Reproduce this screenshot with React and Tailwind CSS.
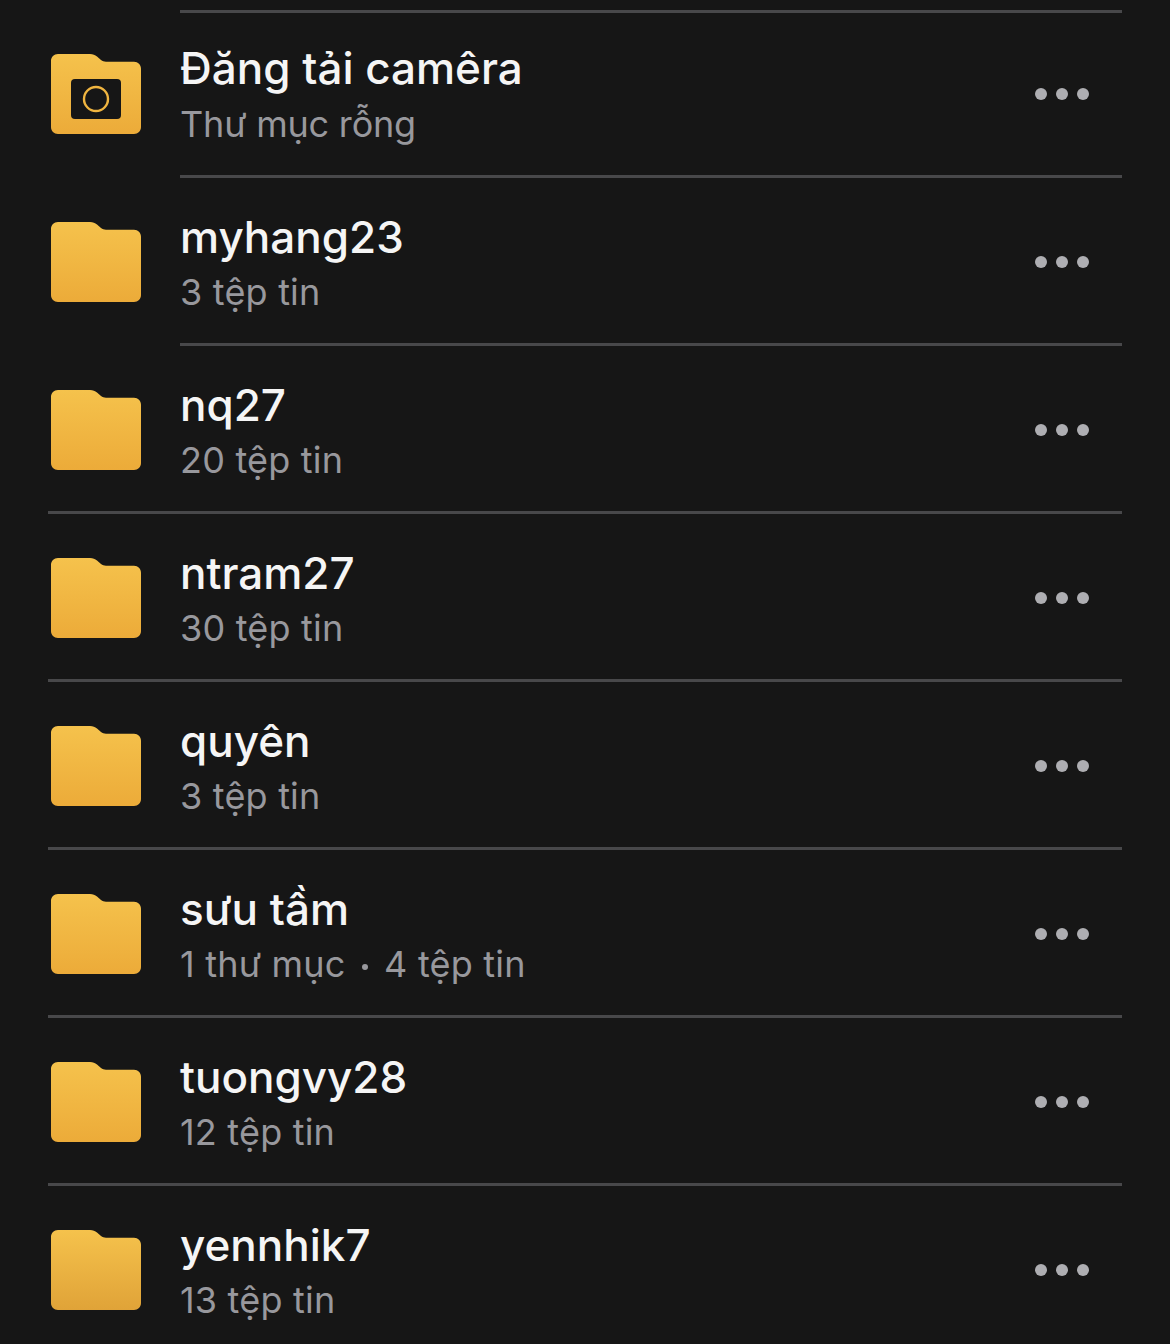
const folders = [
  { name: 'Đăng tải camêra', sub: 'Thư mục rỗng', camera: true, inset: true, first: true },
  { name: 'myhang23', sub: '3 tệp tin', inset: true },
  { name: 'nq27', sub: '20 tệp tin' },
  { name: 'ntram27', sub: '30 tệp tin' },
  { name: 'quyên', sub: '3 tệp tin' },
  { name: 'sưu tầm', sub: <>1 thư mục <span className="inline-block w-[6px] h-[6px] rounded-full bg-[#98989d] align-middle mx-[6px]" /> 4 tệp tin</> },
  { name: 'tuongvy28', sub: '12 tệp tin' },
  { name: 'yennhik7', sub: '13 tệp tin', last: true },
];

function FolderIcon({ camera, last, id }) {
  return (
    <svg width="90" height="80" viewBox="0 0 90 80" className="shrink-0">
      <defs>
        <linearGradient id={id} x1="0" y1="0" x2="0" y2="1">
          <stop offset="0" stopColor="#f5c24c" />
          <stop offset="1" stopColor={last ? '#e0a338' : '#ecab39'} />
        </linearGradient>
      </defs>
      <path
        d="M7 0H39C42 0 44 1 46 2.6L50 6C51.5 7.3 53 7.7 55 7.7H83C87 7.7 90 10.7 90 14.7V73C90 77 87 80 83 80H7C3 80 0 77 0 73V7C0 3 3 0 7 0Z"
        fill={`url(#${id})`}
      />
      {camera && (
        <>
          <rect x="20" y="25" width="50" height="40" rx="4" fill="#161616" />
          <circle cx="45" cy="45" r="12" fill="none" stroke="#f0b540" strokeWidth="2.4" />
        </>
      )}
    </svg>
  );
}

function Row({ item, index }) {
  return (
    <div>
      <div className={`flex items-center pl-[51px] pr-[81px] ${item.first ? 'h-[162px]' : 'h-[165px] pt-[2px]'}`}>
        <FolderIcon camera={item.camera} last={item.last} id={`folder-${index}`} />
        <div className={`ml-[39px] flex-1 min-w-0 ${item.first ? 'pb-[2px]' : ''}`}>
          <div className="text-[44px] leading-[54px] font-[450] text-[#f5f5f5] whitespace-nowrap">{item.name}</div>
          <div className={`text-[36px] leading-[44px] text-[#98989d] whitespace-nowrap ${item.first ? 'mt-[7px] tracking-[-0.2px]' : 'mt-[6px] tracking-[0.2px]'}`}>{item.sub}</div>
        </div>
        <div className="flex gap-[9px]">
          <span className="w-[12px] h-[12px] rounded-full bg-[#aeaeb2]" />
          <span className="w-[12px] h-[12px] rounded-full bg-[#aeaeb2]" />
          <span className="w-[12px] h-[12px] rounded-full bg-[#aeaeb2]" />
        </div>
      </div>
      {!item.last && (
        <div className={`h-[3px] mr-[48px] bg-[#48484a] ${item.inset ? 'ml-[180px]' : 'ml-[48px]'}`} />
      )}
    </div>
  );
}

export default function App() {
  return (
    <div className="w-[1170px] h-[1344px] overflow-hidden bg-[#161616] pt-[10px] font-['Inter',sans-serif]">
      <div className="h-[3px] ml-[180px] mr-[48px] bg-[#48484a]" />
      {folders.map((item, i) => (
        <Row key={item.name} item={item} index={i} />
      ))}
    </div>
  );
}
